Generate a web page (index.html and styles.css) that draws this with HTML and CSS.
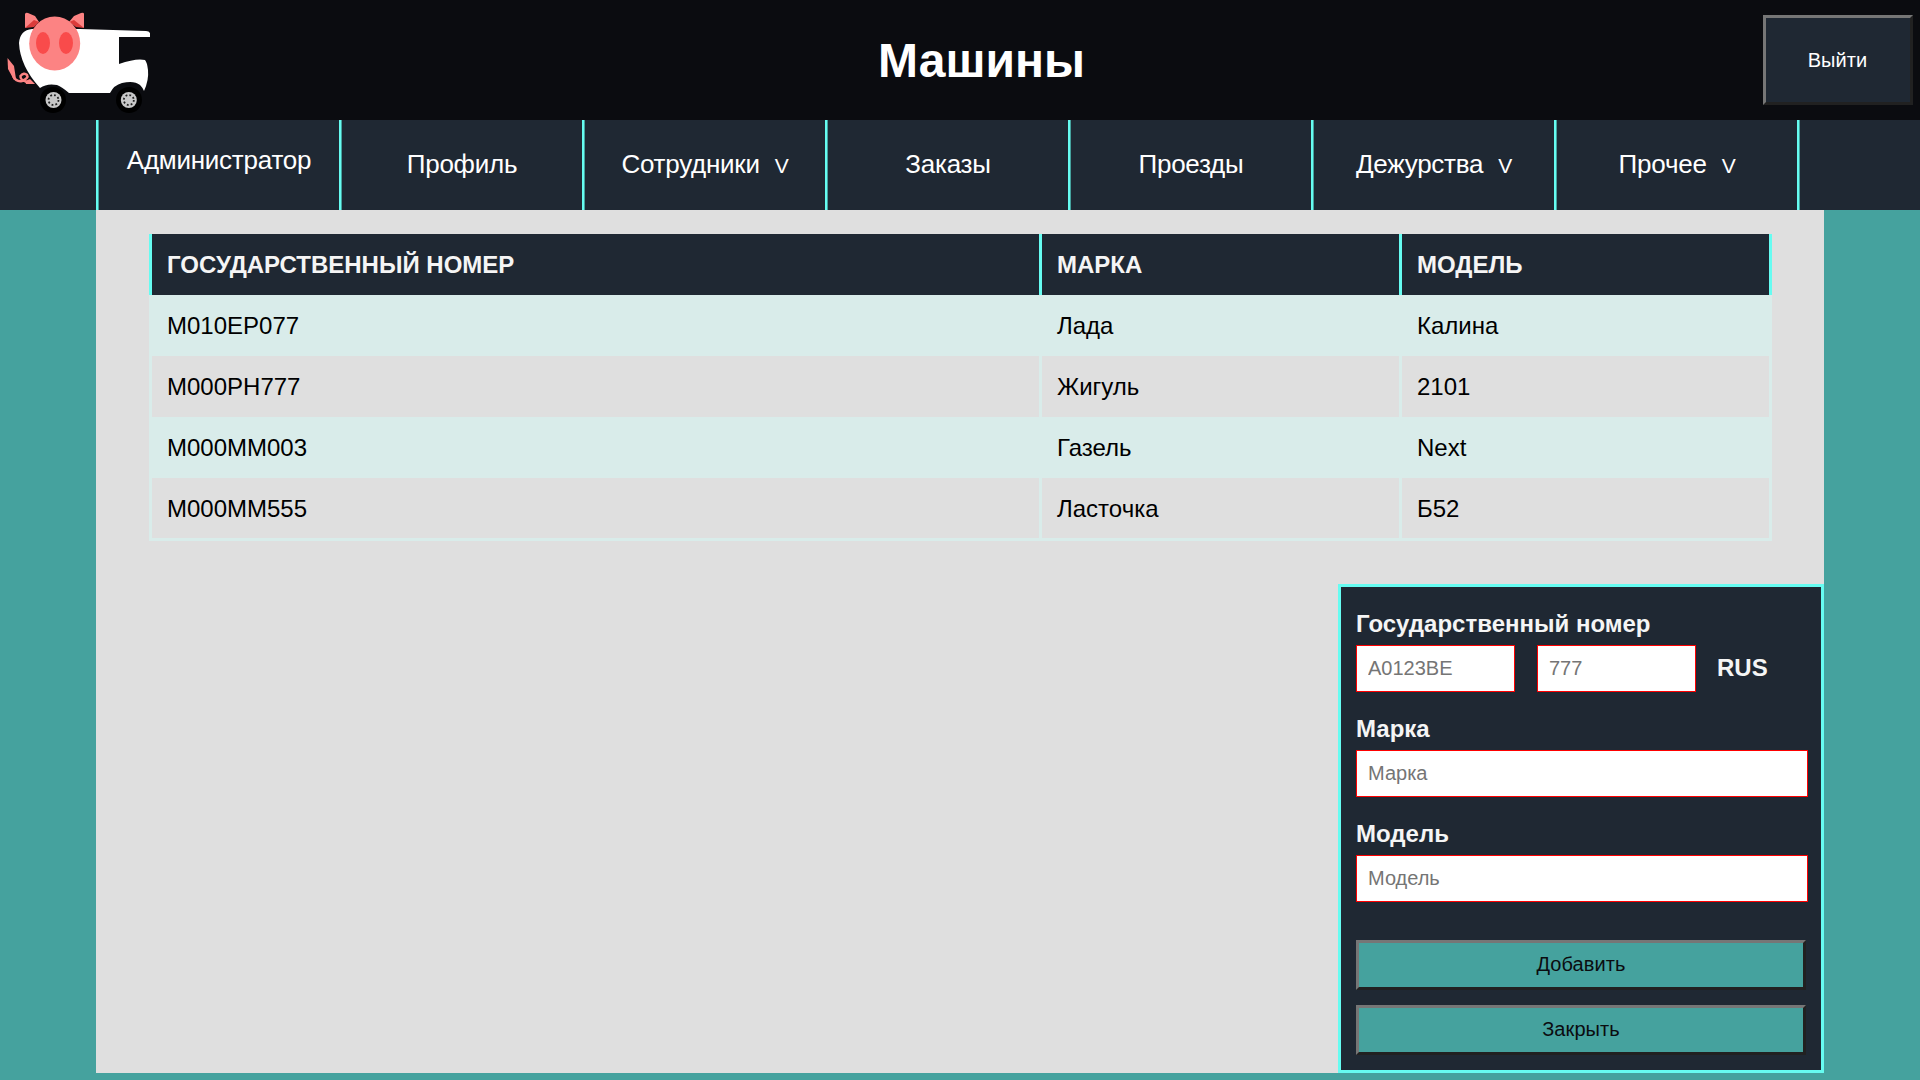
FILE: index.html
```html
<!DOCTYPE html>
<html lang="ru">
<head>
<meta charset="utf-8">
<title>Машины</title>
<link rel="stylesheet" href="styles.css">
</head>
<body>
<header class="header">
  <svg class="logo" viewBox="0 0 160 120" aria-hidden="true">
    <path fill="#fff" d="M32 29Q20 30 19 43Q20 66 40 88Q47 83 57 85Q62 87 69 93H110Q114 85 122 83Q134 80 140 85Q143 88 144 91Q149 80 148 70Q147 62 145 60Q136 58 119 64V37H150V33Q149 31 146 31L80 29Z"/>
    <circle cx="53" cy="100" r="13" fill="#000"/><circle cx="129" cy="100" r="13" fill="#000"/>
    <circle cx="53.500" cy="100" r="8" fill="#c8c8c8"/><circle cx="128.800" cy="100" r="8" fill="#c8c8c8"/>
    <circle class="hub" cx="53.500" cy="100" r="5"/><circle class="hub" cx="128.800" cy="100" r="5"/>
    <path fill="#fc8383" d="M25 28V14Q26 12 28 13L35 16L39 22ZM84 28V14Q84 12 81 13L74 16L69 22Z"/>
    <path fill="#db3b3b" d="M25 28L34 20L39 22L34 27ZM84 28L74 20L69 22L76 27Z"/>
    <ellipse cx="54.700" cy="43.500" rx="25.500" ry="27" fill="#fc8383"/>
    <ellipse cx="43" cy="43" rx="7" ry="11" fill="#f94b4b"/><ellipse cx="66" cy="43" rx="7" ry="11" fill="#f94b4b"/>
    <path fill="#fc8383" d="M7.500 58L14 66L16 79L14 80L8 69Z"/>
    <path fill="#fc8383" d="M25 81L30 79L35 84H26Z"/>
    <path fill="none" stroke="#fc8383" stroke-width="2.500" d="M13 76Q16 82 22 81Q29 78 27 75Q24 72 20.500 76Q20 80 27 82"/>
  </svg>
  <h1 class="title">Машины</h1>
  <button class="exit">Выйти</button>
</header>
<nav class="nav">
  <a class="item user">Администратор</a>
  <a class="item">Профиль</a>
  <a class="item">Сотрудники<span class="arrow">V</span></a>
  <a class="item">Заказы</a>
  <a class="item">Проезды</a>
  <a class="item">Дежурства<span class="arrow">V</span></a>
  <a class="item">Прочее<span class="arrow">V</span></a>
</nav>
<main class="main">
  <table class="cars">
    <thead><tr><th class="c1">Государственный номер</th><th class="c2">Марка</th><th>Модель</th></tr></thead>
    <tbody>
      <tr><td>М010ЕР077</td><td>Лада</td><td>Калина</td></tr>
      <tr><td>М000РН777</td><td>Жигуль</td><td>2101</td></tr>
      <tr><td>М000ММ003</td><td>Газель</td><td>Next</td></tr>
      <tr><td>М000ММ555</td><td>Ласточка</td><td>Б52</td></tr>
    </tbody>
  </table>
  <form class="form">
    <label class="label">Государственный номер</label>
    <div class="plate">
      <input class="input" placeholder="А0123ВЕ"><input class="input" placeholder="777"><b>RUS</b>
    </div>
    <label class="label">Марка</label>
    <input class="input" placeholder="Марка">
    <label class="label">Модель</label>
    <input class="input" placeholder="Модель">
    <div class="actions">
      <button type="button" class="btn">Добавить</button>
      <button type="button" class="btn">Закрыть</button>
    </div>
  </form>
</main>
</body>
</html>
```
FILE: styles.css
```css
* { box-sizing: border-box; }
body {
  margin: 0;
  height: 1080px;
  overflow: hidden;
  background: #45a29e;
  font-family: "Liberation Sans", Arial, sans-serif;
  font-size: 24px;
}
.header {
  display: flex;
  align-items: center;
  height: 120px;
  padding-right: 7px;
  background: #0b0c10;
  color: #fff;
}
.logo { width: 160px; height: 120px; }
.hub { fill: none; stroke: #222; stroke-width: 1.800; stroke-dasharray: 1.800 2.127; }
.title { flex: 1; margin: 0 0 0 40px; text-align: center; font-size: 48px; }
.exit {
  width: 150px;
  height: 90px;
  padding: 1px 7px 0 6px;
  background: #1f2833;
  border: 3px solid;
  border-color: #767676 #212121 #212121 #767676;
  color: #fff;
  font: 20px "Liberation Sans", Arial, sans-serif;
  letter-spacing: 0.1px;
}
.nav {
  display: flex;
  height: 90px;
  padding-left: 96px;
  background: #1f2833;
}
.item {
  display: flex;
  justify-content: center;
  align-items: center;
  width: 243px;
  padding: 0 0 2px 3px;
  color: #fff;
  font-size: 26px;
  letter-spacing: -0.25px;
  background: linear-gradient(90deg, #66fcf1 2px, #45a29e 2px 3px, transparent 3px);
}
.item:last-child {
  width: 246px;
  padding-right: 3px;
  background:
    linear-gradient(90deg, #66fcf1 2px, #45a29e 2px 3px, transparent 3px),
    linear-gradient(90deg, transparent 243px, #66fcf1 243px 245px, #45a29e 245px);
}
.user { padding-bottom: 9px; }
.arrow { margin-left: 15px; font-size: 21px; padding-top: 4px; }
.main {
  display: flex;
  flex-direction: column;
  justify-content: space-between;
  width: 1728px;
  height: 863px;
  margin: 0 auto;
  padding-top: 24px;
  background: #dfdfdf;
}
.cars {
  width: 1623px;
  margin-left: 53px;
  border-collapse: collapse;
  table-layout: fixed;
}
.c1 { width: 890px; }
.c2 { width: 360px; }
.cars th, .cars td {
  height: 61px;
  padding: 0 15px;
  text-align: left;
}
.cars th {
  background: #1f2833;
  color: #f5f5f5;
  text-transform: uppercase;
  border-left: 3px solid #66fcf1;
  border-right: 3px solid #66fcf1;
}
.cars td { border-left: 3px solid #d9ecea; border-right: 3px solid #d9ecea; }
.cars tbody tr:nth-child(odd) { background: #d9ecea; }
.cars tbody tr:last-child { border-bottom: 3px solid #d9ecea; }
.cars tbody tr:last-child td { padding-top: 2px; }
.form {
  display: flex;
  flex-direction: column;
  align-self: flex-end;
  width: 486px;
  height: 489px;
  padding: 22px 13px 15px 15px;
  background: #1f2833;
  border: 3px solid #66fcf1;
  color: #f5f5f5;
}
.label { height: 36px; line-height: 30px; font-weight: bold; }
.input {
  width: 452px;
  height: 47px;
  margin-bottom: 22px;
  padding: 0 11px 1px;
  border: 1px solid #f00;
  background: #fff;
  font: 20px "Liberation Sans", Arial, sans-serif;
}
.plate { display: flex; gap: 22px; line-height: 46px; }
.plate .input { width: 159px; }
.plate b { margin-left: -1px; }
.actions { display: flex; flex-direction: column; gap: 15px; margin-top: 16px; }
.btn {
  width: 450px;
  height: 50px;
  padding: 0 6px 2px;
  background: #45a29e;
  border: 3px solid;
  border-color: #767676 #212121 #212121 #767676;
  color: #0b0c10;
  font: 20px "Liberation Sans", Arial, sans-serif;
  letter-spacing: 0.1px;
}
```
